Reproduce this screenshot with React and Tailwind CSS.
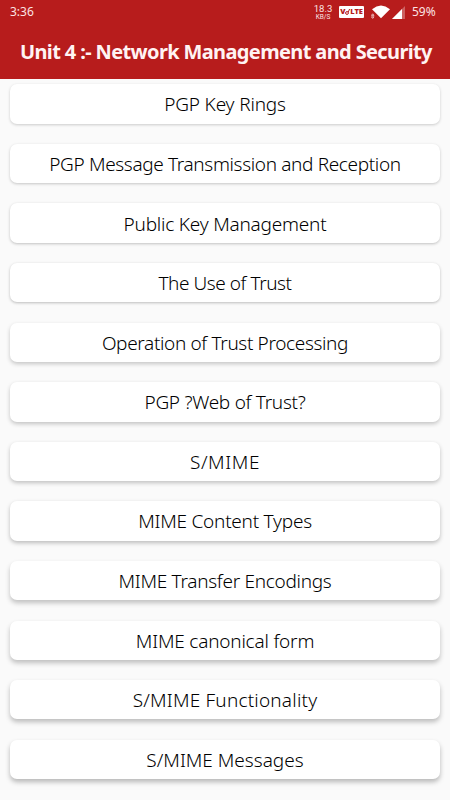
const topics = [
    { name: "PGP Key Rings", tracking: "tracking-[-0.15px]", shadow: "shadow-[0_1px_3px_rgba(0,0,0,0.19)]" },
    { name: "PGP Message Transmission and Reception", tracking: "tracking-[-0.35px]", shadow: "shadow-[0_1px_3px_rgba(0,0,0,0.21)]" },
    { name: "Public Key Management", tracking: "tracking-[-0.21px]", shadow: "shadow-[0_1px_3px_rgba(0,0,0,0.23)]" },
    { name: "The Use of Trust", tracking: "tracking-[-0.45px]", shadow: "shadow-[0_1px_3px_rgba(0,0,0,0.25)]" },
    { name: "Operation of Trust Processing", tracking: "tracking-[-0.35px]", shadow: "shadow-[0_2px_4px_rgba(0,0,0,0.21)]" },
    { name: "PGP ?Web of Trust?", tracking: "tracking-[-0.28px]", shadow: "shadow-[0_2px_4px_rgba(0,0,0,0.22)]" },
    { name: "S/MIME", tracking: "tracking-[0.6px]", shadow: "shadow-[0_2px_4px_rgba(0,0,0,0.23)]" },
    { name: "MIME Content Types", tracking: "tracking-[-0.24px]", shadow: "shadow-[0_2px_4px_rgba(0,0,0,0.25)]" },
    { name: "MIME Transfer Encodings", tracking: "tracking-[-0.28px]", shadow: "shadow-[0_3px_5px_rgba(0,0,0,0.23)]" },
    { name: "MIME canonical form", tracking: "tracking-[-0.2px]", shadow: "shadow-[0_3px_5px_rgba(0,0,0,0.24)]" },
    { name: "S/MIME Functionality", tracking: "tracking-[0.2px]", shadow: "shadow-[0_3px_5px_rgba(0,0,0,0.25)]" },
    { name: "S/MIME Messages", tracking: "tracking-normal", shadow: "shadow-[0_3px_5px_rgba(0,0,0,0.27)]" },
];

function WifiIcon() {
    return (
        <svg className="w-[19px] h-4" viewBox="0 0 19 16" fill="#fff">
            <path d="M1 5.2Q10 -2.2 19 5.2L10 14.2Z" />
            <g fill="none" stroke="#fff" strokeWidth="0.8" strokeOpacity="0.8">
                <path d="M0.4 11.4L1.7 9.8L3 11.4Z" />
                <path d="M0.4 12.8H3L1.7 14.4Z" />
            </g>
        </svg>
    );
}

function SignalIcon() {
    return (
        <svg className="w-[13px] h-[13px]" viewBox="0 0 13 13" fill="#fff">
            <path d="M13 0V13H0Z" fillOpacity="0.3" />
            <path d="M10 3V13H0Z" />
        </svg>
    );
}

function VolteBadge() {
    return (
        <div className="w-[25px] h-3 rounded-[1px] bg-white text-[#b71c1c] flex items-center justify-center font-['Open_Sans',sans-serif] font-extrabold text-[7.5px] tracking-[-0.1px] leading-none">
            <span>V</span>
            <svg className="w-[5px] h-[8px]" viewBox="0 0 5 8" fill="none" stroke="currentColor">
                <circle cx="2" cy="5" r="1.4" />
                <path d="M3.2 4L4.6 1" />
            </svg>
            <span>LTE</span>
        </div>
    );
}

function StatusBar() {
    return (
        <div className="h-6 pl-[10px] pr-[14px] flex items-center text-[12px] text-[#fbe3e3]">
            <span>3:36</span>
            <div className="ml-auto mr-[6px] w-5 flex flex-col items-center font-[Roboto,sans-serif]">
                <span className="text-[9.5px] leading-[10px]">18.3</span>
                <span className="text-[6.5px] leading-[7px]">KB/S</span>
            </div>
            <VolteBadge />
            <div className="ml-[7px] flex">
                <WifiIcon />
            </div>
            <div className="ml-[2px]">
                <SignalIcon />
            </div>
            <span className="ml-[7px] w-[24px]">59%</span>
        </div>
    );
}

function TopicCard({ topic }) {
    return (
        <button
            className={`w-full h-[39.4px] pt-[1.4px] rounded-[7px] bg-white flex items-center justify-center whitespace-nowrap text-[19px] font-[350] text-black ${topic.shadow}`}
        >
            <span className={topic.tracking}>{topic.name}</span>
        </button>
    );
}

export default function App() {
    return (
        <div className="h-[800px] overflow-hidden bg-[#fafafa] font-['Noto_Sans',sans-serif]">
            <header className="h-[79px] bg-[#b71c1c]">
                <StatusBar />
                <h1 className="h-[55px] pl-5 pt-px flex items-center whitespace-nowrap text-[20px] tracking-[-0.63px] font-bold text-[#fff3f3]">
                    Unit 4 :- Network Management and Security
                </h1>
            </header>
            <main className="px-[10px] pt-[5.3px] flex flex-col gap-[20.2px]">
                {topics.map((topic) => (
                    <TopicCard key={topic.name} topic={topic} />
                ))}
            </main>
        </div>
    );
}
